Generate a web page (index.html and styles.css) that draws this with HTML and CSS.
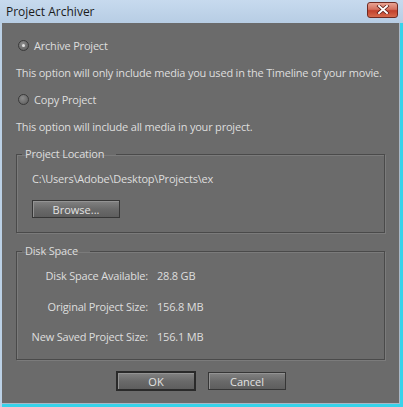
FILE: index.html
```html
<!DOCTYPE html>
<html lang="en">
<head>
    <meta charset="UTF-8">
    <meta name="viewport" content="width=device-width, initial-scale=1.0">
    <title>Project Archiver</title>
    <link rel="stylesheet" href="styles.css">
</head>
<body>
    <div class="window">
        <div class="titlebar">
            <span class="title">Project Archiver</span>
            <button class="close" type="button" aria-label="Close">
                <svg width="14" height="9" viewBox="0 0 14 9">
                    <path d="M3 1 L11 8 M11 1 L3 8" stroke="#5a1a14" stroke-width="3.4" stroke-linecap="square"/>
                    <path d="M3 1 L11 8 M11 1 L3 8" stroke="#ffffff" stroke-width="2" stroke-linecap="square"/>
                </svg>
            </button>
        </div>

        <div class="content">
            <label class="option">
                <span class="radio checked"></span>
                Archive Project
            </label>
            <p class="hint">This option will only include media you used in the Timeline of your movie.</p>

            <label class="option">
                <span class="radio"></span>
                Copy Project
            </label>
            <p class="hint">This option will include all media in your project.</p>

            <fieldset class="group">
                <legend>Project Location</legend>
                <div class="group-body">
                    <div class="path">C:\Users\Adobe\Desktop\Projects\ex</div>
                    <button class="btn browse" type="button">Browse...</button>
                </div>
            </fieldset>

            <fieldset class="group disk">
                <legend>Disk Space</legend>
                <div class="stats">
                    <span class="stat-label">Disk Space Available:</span>
                    <span class="stat-value">28.8 GB</span>
                    <span class="stat-label">Original Project Size:</span>
                    <span class="stat-value">156.8 MB</span>
                    <span class="stat-label">New Saved Project Size:</span>
                    <span class="stat-value">156.1 MB</span>
                </div>
            </fieldset>

            <div class="actions">
                <button class="btn ok" type="button">OK</button>
                <button class="btn cancel" type="button">Cancel</button>
            </div>
        </div>
    </div>
</body>
</html>
```

FILE: styles.css
```css
html, body {
    margin: 0;
    padding: 0;
}
body {
    width: 403px;
    height: 407px;
    overflow: hidden;
    font-family: "Open Sans", "DejaVu Sans", sans-serif;
    font-size: 11px;
    letter-spacing: -0.2px;
    color: #dedede;
}
.window {
    height: 407px;
    display: flex;
    flex-direction: column;
    background: #bcd1e6;
}
.titlebar {
    height: 23px;
    display: flex;
    align-items: center;
    justify-content: space-between;
    padding: 0 5px 0 6px;
    background: linear-gradient(#c7daee, #b7cde4);
}
.title {
    font-family: "Open Sans", sans-serif;
    font-size: 12px;
    letter-spacing: 0;
    color: #1b1b1b;
}
.close {
    width: 31px;
    height: 16px;
    margin-top: -4px;
    padding: 0;
    display: flex;
    align-items: center;
    justify-content: center;
    border: 1px solid #6f2a22;
    border-radius: 3px;
    background: linear-gradient(#e8a393 0%, #d4715f 45%, #c2412c 55%, #d66a4c 100%);
}
.content {
    flex: 1;
    padding: 9px 0 0 14px;
    margin: 0 0 0 2px;
    background: #6b6b6b;
    border-right: 3px solid #37d3ea;
    border-bottom: 3px solid #37d3ea;
    box-shadow: inset -1px -1px 0 #a9b8c6;
}
.option {
    height: 27px;
    display: flex;
    align-items: center;
    gap: 5px;
    padding-left: 2px;
}
.radio {
    width: 9px;
    height: 9px;
    border: 1px solid #3a3a3a;
    border-radius: 50%;
    background: radial-gradient(circle at 40% 35%, #8c8c8c, #595959);
    display: flex;
    align-items: center;
    justify-content: center;
}
.radio.checked::after {
    content: "";
    width: 3px;
    height: 3px;
    border-radius: 50%;
    background: #e4e4e4;
}
.hint {
    margin: 0;
    height: 27px;
    line-height: 27px;
    white-space: nowrap;
}
.group {
    width: 367px;
    margin: 6px 0 0 0;
    padding: 0;
    border: 1px solid #4a4a4a;
    box-shadow: inset 1px 1px 0 #7b7b7b, 1px 1px 0 #7b7b7b;
    min-inline-size: 0;
}
.group legend {
    margin-left: 5px;
    padding: 0 12px 0 3px;
    line-height: 16px;
}
.group-body {
    padding: 9px 0 14px 15px;
}
.path {
    line-height: 16px;
}
.btn {
    font-family: "Open Sans", sans-serif;
    font-size: 11px;
    color: #e2e2e2;
    padding: 0;
    border: 1px solid #363636;
    background: linear-gradient(#828282, #6a6a6a 50%, #5e5e5e);
    box-shadow: inset 1px 1px 0 #939393;
}
.browse {
    width: 88px;
    height: 18px;
    margin-top: 13px;
    display: block;
}
.disk {
    margin-top: 10px;
}
.stats {
    display: grid;
    grid-template-columns: 131px auto;
    column-gap: 9px;
    row-gap: 14.5px;
    padding: 9px 0 14px 0;
    line-height: 16px;
}
.stat-label {
    text-align: right;
}
.actions {
    display: flex;
    justify-content: center;
    gap: 12px;
    margin: 11px 0 0 -14px;
}
.ok {
    width: 80px;
    height: 20px;
    border: 2px solid #2a2a2a;
}
.cancel {
    width: 78px;
    height: 18px;
    margin-top: 1px;
}
```
